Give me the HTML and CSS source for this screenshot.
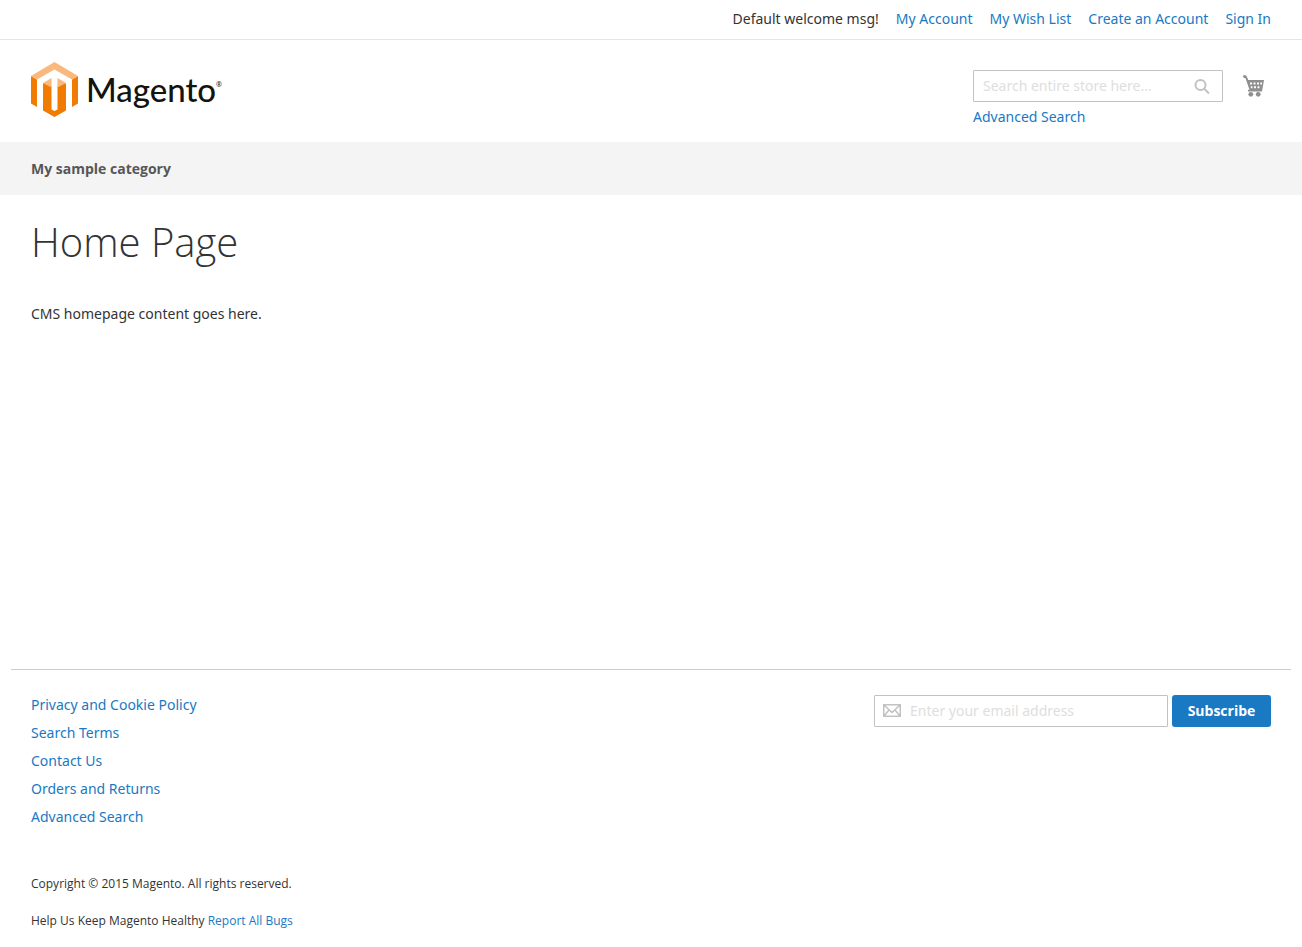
FILE: index.html
```html
<!DOCTYPE html>
<html lang="en">
<head>
<meta charset="utf-8">
<title>Home Page</title>
<link rel="stylesheet" href="styles.css">
</head>
<body>
<div class="page">
  <header>
    <div class="panel">
      <ul class="account-links">
        <li>Default welcome msg!</li>
        <li><a href="#">My Account</a></li>
        <li><a href="#">My Wish List</a></li>
        <li><a href="#">Create an Account</a></li>
        <li><a href="#">Sign In</a></li>
      </ul>
    </div>
    <div class="masthead">
      <a class="logo" href="#">
        <svg class="logo-mark" viewBox="0 0 47 55" aria-hidden="true">
          <path fill="#f17a00" d="M0 14L6 17.500V45L0 41.500ZM47 14L41 17.500V45L47 41.500ZM12 21L20.500 24V47.500L23.500 49L26.500 47.500V24L35 21V48.500L23.500 55L12 48.500Z"/>
          <path fill="#fab87d" d="M0 14L23.500 0L47 14L41 17.500L23.500 7.500L6 17.500ZM12 21L20.500 16V25.500ZM35 21L26.500 16V25.500Z"/>
        </svg>
        <span class="logo-name">Magento</span><span class="logo-reg">®</span>
      </a>
      <div class="tools">
        <form class="search">
          <div class="search-field">
            <input class="field" type="text" aria-label="Search" placeholder="Search entire store here...">
            <button class="search-button" type="button" aria-label="Search">
              <svg width="16" height="16" viewBox="0 0 16 16" fill="none" stroke="#c2c2c2" stroke-width="2" aria-hidden="true"><circle cx="6.500" cy="6" r="5"/><path d="M10 9.500L15 14.500"/></svg>
            </button>
          </div>
          <a class="advanced" href="#">Advanced Search</a>
        </form>
        <a class="cart" href="#" aria-label="My Cart">
          <svg width="22" height="23" viewBox="0 0 22 23" aria-hidden="true">
            <path fill="#8f8f8f" fill-rule="evenodd" d="M0 1.500Q0 0 1.500 0Q3.300 0 4 2L5.300 5H21L19 16.500H5V14.800H6.500L2.500 3.200Q0 3.200 0 1.500ZM7 7.500V9.500H9V7.500ZM10.500 7.500V9.500H12.500V7.500ZM14 7.500V9.500H16V7.500ZM17.300 7.500V9.500H19V7.500ZM7.800 11.200V13.200H9.500V11.200ZM11 11.200V13.200H13V11.200ZM14.500 11.200V13.200H16.500V11.200Z"/>
            <circle cx="7.800" cy="19.300" r="2.400" fill="#8f8f8f"/><circle cx="15.200" cy="19.300" r="2.400" fill="#8f8f8f"/>
          </svg>
        </a>
      </div>
    </div>
    <nav class="nav"><a href="#">My sample category</a></nav>
  </header>
  <main class="main">
    <h1>Home Page</h1>
    <p>CMS homepage content goes here.</p>
  </main>
  <footer class="footer">
    <div class="footer-top">
      <ul class="footer-links">
        <li><a href="#">Privacy and Cookie Policy</a></li>
        <li><a href="#">Search Terms</a></li>
        <li><a href="#">Contact Us</a></li>
        <li><a href="#">Orders and Returns</a></li>
        <li><a href="#">Advanced Search</a></li>
      </ul>
      <form class="newsletter">
        <label class="email">
          <svg class="email-icon" width="18" height="13" viewBox="0 0 18 13" fill="none" stroke="#c2c2c2" stroke-width="1.500" aria-hidden="true"><path d="M.75 .75H17.250V12.250H.75ZM1 1L9 8.500L17 1M1 12L6 6M17 12L12 6"/></svg>
          <input class="field" type="email" aria-label="Email address" placeholder="Enter your email address">
        </label>
        <button class="subscribe" type="button">Subscribe</button>
      </form>
    </div>
    <p class="small copyright">Copyright © 2015 Magento. All rights reserved.</p>
    <p class="small">Help Us Keep Magento Healthy <a href="#">Report All Bugs</a></p>
  </footer>
</div>
</body>
</html>
```
FILE: styles.css
```css
* {
  box-sizing: border-box;
}

body {
  margin: 0;
  background: #fff;
  color: #333;
  font: 14px/20px "Noto Sans", "Open Sans", sans-serif;
}

a {
  color: #1979c3;
  text-decoration: none;
}

ul {
  list-style: none;
  margin: 0;
  padding: 0;
}

.page {
  display: flex;
  flex-direction: column;
  min-height: 100vh;
}

.panel {
  padding: 9px 31px 10px;
  border-bottom: 1px solid #e5e5e5;
}

.account-links {
  display: flex;
  justify-content: flex-end;
  gap: 17px;
}

.masthead {
  display: flex;
  justify-content: space-between;
  padding: 22px 31px 15px;
}

.logo {
  display: flex;
  align-items: flex-start;
  color: #14130c;
}

.logo-mark {
  width: 47px;
  height: 55px;
}

.logo-name {
  margin-left: 8px;
  padding-top: 7px;
  font: 500 33px/40px Lato, sans-serif;
}

.logo-reg {
  padding-top: 18px;
  font-size: 7px;
  line-height: 10px;
}

.tools {
  display: flex;
  gap: 20px;
  padding: 8px 6px 0 0;
}

.search {
  width: 250px;
}

.search-field {
  position: relative;
}

.field {
  display: block;
  width: 100%;
  height: 32px;
  padding: 0 9px 1px;
  border: 1px solid #c2c2c2;
  border-radius: 1px;
  background: #fff;
  color: #333;
  font: inherit;
}

.field::placeholder {
  color: #dedede;
  opacity: 1;
}

.search-button {
  position: absolute;
  top: 9px;
  right: 13px;
  display: flex;
  padding: 0;
  border: 0;
  background: none;
}

.advanced {
  display: block;
  margin-top: 5px;
}

.cart {
  padding-top: 5px;
}

.nav {
  padding: 17px 31px 16px;
  background: #f4f4f4;
}

.nav a {
  color: #575757;
  font-family: "Open Sans", sans-serif;
  font-weight: 700;
}

.main {
  flex: 1;
  padding: 19px 31px;
}

h1 {
  margin: 0 0 35px;
  font: 300 40px/55px "Open Sans", sans-serif;
}

p {
  margin: 0;
}

.footer {
  margin: 0 11px;
  padding: 25px 20px 18px;
  border-top: 1px solid #ccc;
}

.footer-top {
  display: flex;
  justify-content: space-between;
  align-items: flex-start;
}

.footer-links {
  display: grid;
  gap: 8px;
}

.newsletter {
  display: flex;
  gap: 4px;
}

.email {
  position: relative;
  width: 294px;
}

.email .field {
  padding-left: 35px;
}

.email-icon {
  position: absolute;
  top: 9px;
  left: 9px;
}

.subscribe {
  width: 99px;
  padding: 0;
  border: 0;
  border-radius: 3px;
  background: #1979c3;
  color: #fff;
  font: 700 14px/20px "Open Sans", sans-serif;
}

.small {
  font: 12px/17px "Open Sans", sans-serif;
}

.copyright {
  margin: 48px 0 20px;
}
```
